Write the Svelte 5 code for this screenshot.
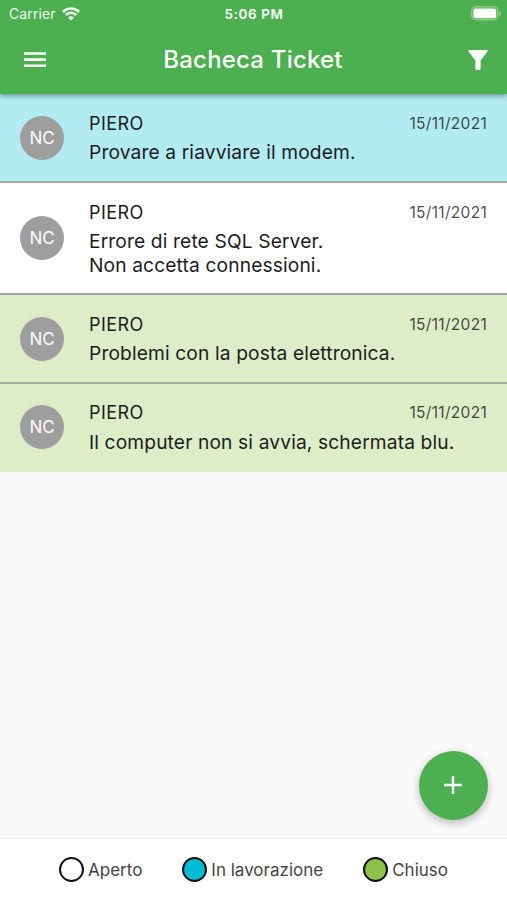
<script lang="ts">
  type Status = 'open' | 'working' | 'closed';

  interface Ticket {
    id: number;
    initials: string;
    author: string;
    date: string;
    text: string;
    status: Status;
  }

  let tickets: Ticket[] = $state([
    { id: 1, initials: 'NC', author: 'PIERO', date: '15/11/2021', text: 'Provare a riavviare il modem.', status: 'working' },
    { id: 2, initials: 'NC', author: 'PIERO', date: '15/11/2021', text: 'Errore di rete SQL Server.\nNon accetta connessioni.', status: 'open' },
    { id: 3, initials: 'NC', author: 'PIERO', date: '15/11/2021', text: 'Problemi con la posta elettronica.', status: 'closed' },
    { id: 4, initials: 'NC', author: 'PIERO', date: '15/11/2021', text: 'Il computer non si avvia, schermata blu.', status: 'closed' },
  ]);

  const legend: { status: Status; label: string }[] = [
    { status: 'open', label: 'Aperto' },
    { status: 'working', label: 'In lavorazione' },
    { status: 'closed', label: 'Chiuso' },
  ];
</script>

<div class="screen">
  <header>
    <div class="status-bar">
      <div class="carrier">
        <span>Carrier</span>
        <svg class="wifi" viewBox="0 0 18 14" aria-hidden="true">
          <path d="M.9 5a11.4 11.4 0 0 1 16.2 0M3.8 8a7.3 7.3 0 0 1 10.4 0" fill="none" stroke="#fff" stroke-width="2.5" />
          <path d="M9 13.6 6 10.6a4.2 4.2 0 0 1 6 0z" fill="#fff" />
        </svg>
      </div>
      <span class="time">5:06 PM</span>
      <svg class="battery" viewBox="0 0 31 15" aria-hidden="true">
        <rect x=".8" y=".8" width="26" height="13" rx="4" fill="none" stroke="#fff" stroke-opacity=".42" stroke-width="1.2" />
        <rect x="2.4" y="2.4" width="22.8" height="9.8" rx="2" fill="#fff" />
        <path d="M28.2 5.2c2.2.8 2.2 3.6 0 4.400z" fill="#fff" fill-opacity=".5" />
      </svg>
    </div>
    <div class="app-bar">
      <button class="icon-button" aria-label="Menu">
        <svg width="24" height="18" viewBox="0 0 24 18">
          <path d="M1 2.500h22M1 8.600h22M1 14.700h22" stroke="#fff" stroke-width="2.6" />
        </svg>
      </button>
      <h1>Bacheca Ticket</h1>
      <button class="icon-button" aria-label="Filtro">
        <svg width="20" height="22" viewBox="0 0 20 22">
          <path d="M1 1H19Q20.200 1.300 19.500 2.500L12.600 11.500V19.500Q12.600 21 11.100 21H8.900Q7.400 21 7.400 19.500V11.500L.5 2.500Q-.2 1.300 1 1Z" fill="#fff" />
        </svg>
      </button>
    </div>
  </header>

  <main>
    {#each tickets as ticket (ticket.id)}
      <article class="ticket {ticket.status}">
        <div class="avatar">{ticket.initials}</div>
        <div class="body">
          <div class="heading">
            <span class="author">{ticket.author}</span>
            <time>{ticket.date}</time>
          </div>
          <p>{ticket.text}</p>
        </div>
      </article>
    {/each}
    <button class="fab" aria-label="Nuovo ticket">
      <svg width="18" height="18" viewBox="0 0 18 18">
        <path d="M9 0v18M0 9h18" stroke="#fff" stroke-width="2.4" />
      </svg>
    </button>
  </main>

  <footer>
    {#each legend as item}
      <div class="legend-item">
        <span class="dot {item.status}"></span>
        <span class="label">{item.label}</span>
      </div>
    {/each}
  </footer>
</div>

<style>
  :global(body) {
    margin: 0;
  }

  .screen {
    display: flex;
    flex-direction: column;
    height: 900px;
    overflow: hidden;
    background: #fafafa;
    font-family: Inter, Roboto, sans-serif;
    color: #1c1c1c;
  }

  button {
    padding: 0;
    border: 0;
    background: none;
    cursor: pointer;
  }

  svg {
    display: block;
  }

  header {
    position: relative;
    z-index: 1;
    flex: none;
    height: 94px;
    background: #4caf50;
    color: #fff;
    box-shadow: 0 2px 5px rgba(0, 0, 0, 0.38);
  }

  .status-bar {
    display: grid;
    grid-template-columns: 1fr auto 1fr;
    align-items: center;
    height: 27px;
    padding: 0 5px 0 9px;
  }

  .carrier {
    display: flex;
    align-items: center;
    gap: 6px;
    font-size: 14px;
    letter-spacing: 0.1px;
    opacity: 0.92;
  }

  .wifi {
    width: 18px;
    height: 14px;
  }

  .time {
    margin-right: 3px;
    font-size: 13.5px;
    font-weight: 600;
    letter-spacing: 0.6px;
  }

  .battery {
    width: 31px;
    height: 15px;
    justify-self: end;
  }

  .app-bar {
    display: grid;
    grid-template-columns: 1fr auto 1fr;
    align-items: center;
    height: 65px;
    padding: 0 19px 0 18px;
  }

  .icon-button:first-child {
    justify-self: start;
    margin-left: 5px;
  }

  .icon-button:last-child {
    justify-self: end;
  }

  h1 {
    margin: 0;
    font-size: 24px;
    font-weight: 500;
    letter-spacing: 0.2px;
  }

  main {
    position: relative;
    flex: 1;
  }

  .ticket {
    display: flex;
    align-items: center;
    box-sizing: border-box;
    min-height: 89px;
    padding: 16px 20px;
    border-bottom: 2px solid #a3a9a9;
  }

  .ticket:last-of-type {
    min-height: 88px;
    padding: 15px 20px 17px;
    border-bottom: 0;
  }

  .ticket.working {
    background: #b2ebf2;
  }

  .ticket.open {
    background: #fff;
  }

  .ticket.closed {
    background: #dcedc8;
  }

  .avatar {
    display: flex;
    flex: none;
    align-items: center;
    justify-content: center;
    width: 44px;
    height: 44px;
    margin-right: 25px;
    border-radius: 50%;
    background: #9e9e9e;
    color: #fff;
    font-size: 17px;
  }

  .body {
    flex: 1;
  }

  .heading {
    display: flex;
    align-items: center;
    justify-content: space-between;
    height: 26px;
  }

  .author {
    font-size: 18px;
    letter-spacing: 0.45px;
  }

  time {
    font-size: 15.5px;
    letter-spacing: 0.3px;
    color: rgba(0, 0, 0, 0.72);
  }

  p {
    margin: 5px 0 0;
    font-size: 19.2px;
    line-height: 23.5px;
    letter-spacing: 0.13px;
    white-space: pre-line;
  }

  .fab {
    position: absolute;
    right: 19.5px;
    bottom: 18.5px;
    display: flex;
    align-items: center;
    justify-content: center;
    width: 69px;
    height: 69px;
    border-radius: 50%;
    background: #4caf50;
    box-shadow: 0 4px 8px rgba(0, 0, 0, 0.2), 0 1px 12px rgba(0, 0, 0, 0.08);
  }

  footer {
    display: flex;
    flex: none;
    align-items: center;
    justify-content: center;
    gap: 40px;
    box-sizing: border-box;
    height: 62px;
    border-top: 1px solid #f3f3f3;
    background: #fff;
  }

  .legend-item {
    display: flex;
    align-items: center;
    gap: 4px;
  }

  .dot {
    box-sizing: border-box;
    width: 25px;
    height: 25px;
    border: 2px solid #111;
    border-radius: 50%;
    background: #fff;
  }

  .dot.working {
    background: #00bcd4;
  }

  .dot.closed {
    background: #8bc34a;
  }

  .label {
    font-size: 17px;
    color: #444;
  }
</style>
